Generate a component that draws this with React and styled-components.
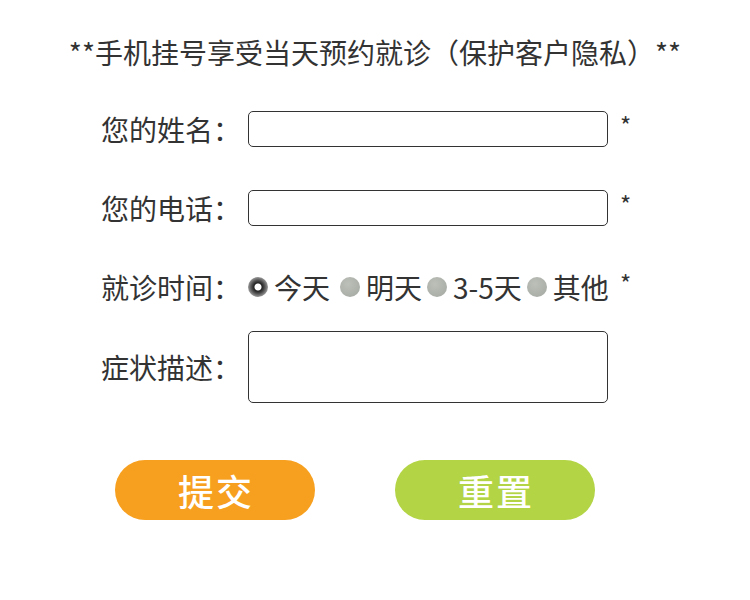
import React, { useState } from 'react';
import styled, { createGlobalStyle } from 'styled-components';

const options = ['今天', '明天', '3-5天', '其他'];

export default function App() {
  const [day, setDay] = useState('今天');

  return (
    <>
      <GlobalStyle />
      <Page>
        <Title>**手机挂号享受当天预约就诊（保护客户隐私）**</Title>
        <Form onSubmit={(e) => e.preventDefault()}>
          <Row $top={39}>
            <Label>您的姓名：</Label>
            <Input type="text" />
            <Star>*</Star>
          </Row>
          <Row $top={43}>
            <Label>您的电话：</Label>
            <Input type="text" />
            <Star>*</Star>
          </Row>
          <Row $top={43}>
            <Label>就诊时间：</Label>
            <Radios>
              {options.map((opt, i) => (
                <Option key={opt} $wide={i === 0} onClick={() => setDay(opt)}>
                  <Dot $checked={day === opt} />
                  {opt}
                </Option>
              ))}
            </Radios>
            <Star>*</Star>
          </Row>
          <Row $top={26}>
            <Label>症状描述：</Label>
            <TextArea />
          </Row>
          <Buttons>
            <Button type="submit" $color="#f7a01f">提交</Button>
            <Button type="reset" $color="#b3d445">重置</Button>
          </Buttons>
        </Form>
      </Page>
    </>
  );
}

const GlobalStyle = createGlobalStyle`
  body {
    margin: 0;
    background: #fff;
    font-family: "Noto Sans CJK SC", "Noto Sans", sans-serif;
    color: #333;
  }
`;

const Page = styled.div`
  width: 750px;
  height: 600px;
  padding-top: 32px;
  box-sizing: border-box;
`;

const Title = styled.h1`
  margin: 0;
  font-size: 28px;
  font-weight: 400;
  line-height: 40px;
  text-align: center;
  color: #333;
`;

const Form = styled.form`
  display: flex;
  flex-direction: column;
  padding-left: 101px;
`;

const Row = styled.div`
  display: flex;
  align-items: center;
  margin-top: ${(p) => p.$top}px;
`;

const Label = styled.span`
  width: 147px;
  flex-shrink: 0;
  font-size: 28px;
  line-height: 36px;
  white-space: nowrap;
`;

const Input = styled.input`
  width: 360px;
  height: 36px;
  box-sizing: border-box;
  border: 1px solid #333;
  border-radius: 5px;
  padding: 0 8px;
  font: inherit;
  font-size: 18px;
  outline: none;
`;

const TextArea = styled.textarea`
  width: 360px;
  height: 72px;
  box-sizing: border-box;
  border: 1px solid #333;
  border-radius: 5px;
  resize: none;
  outline: none;
  font: inherit;
`;

const Star = styled.span`
  margin-left: 12px;
  font-size: 24px;
  line-height: 36px;
  align-self: flex-start;
  margin-top: -4px;
`;

const Radios = styled.div`
  width: 360px;
  flex-shrink: 0;
  display: flex;
  align-items: center;
  gap: 5px;
  font-size: 28px;
  line-height: 36px;
  white-space: nowrap;
`;

const Option = styled.label`
  display: flex;
  align-items: center;
  flex-shrink: 0;
  gap: 6px;
  cursor: pointer;
  margin-right: ${(p) => (p.$wide ? 5 : 0)}px;
`;

const Dot = styled.span`
  width: 20px;
  height: 20px;
  flex-shrink: 0;
  border-radius: 50%;
  box-sizing: border-box;
  background: ${(p) =>
    p.$checked
      ? 'radial-gradient(circle at 50% 50%, #fff 0 3px, #222 4px, #444 6px, #999 10px)'
      : 'radial-gradient(circle at 40% 35%, #bcc0b9, #a3a8a1)'};
`;

const Buttons = styled.div`
  display: flex;
  gap: 80px;
  margin-top: 57px;
  padding-left: 14px;
`;

const Button = styled.button`
  width: 200px;
  height: 60px;
  border: none;
  border-radius: 30px;
  background: ${(p) => p.$color};
  color: #fff;
  font-family: inherit;
  font-size: 36px;
  font-weight: 500;
  letter-spacing: 2px;
  text-indent: 2px;
  line-height: 60px;
  padding: 0;
  cursor: pointer;
`;
